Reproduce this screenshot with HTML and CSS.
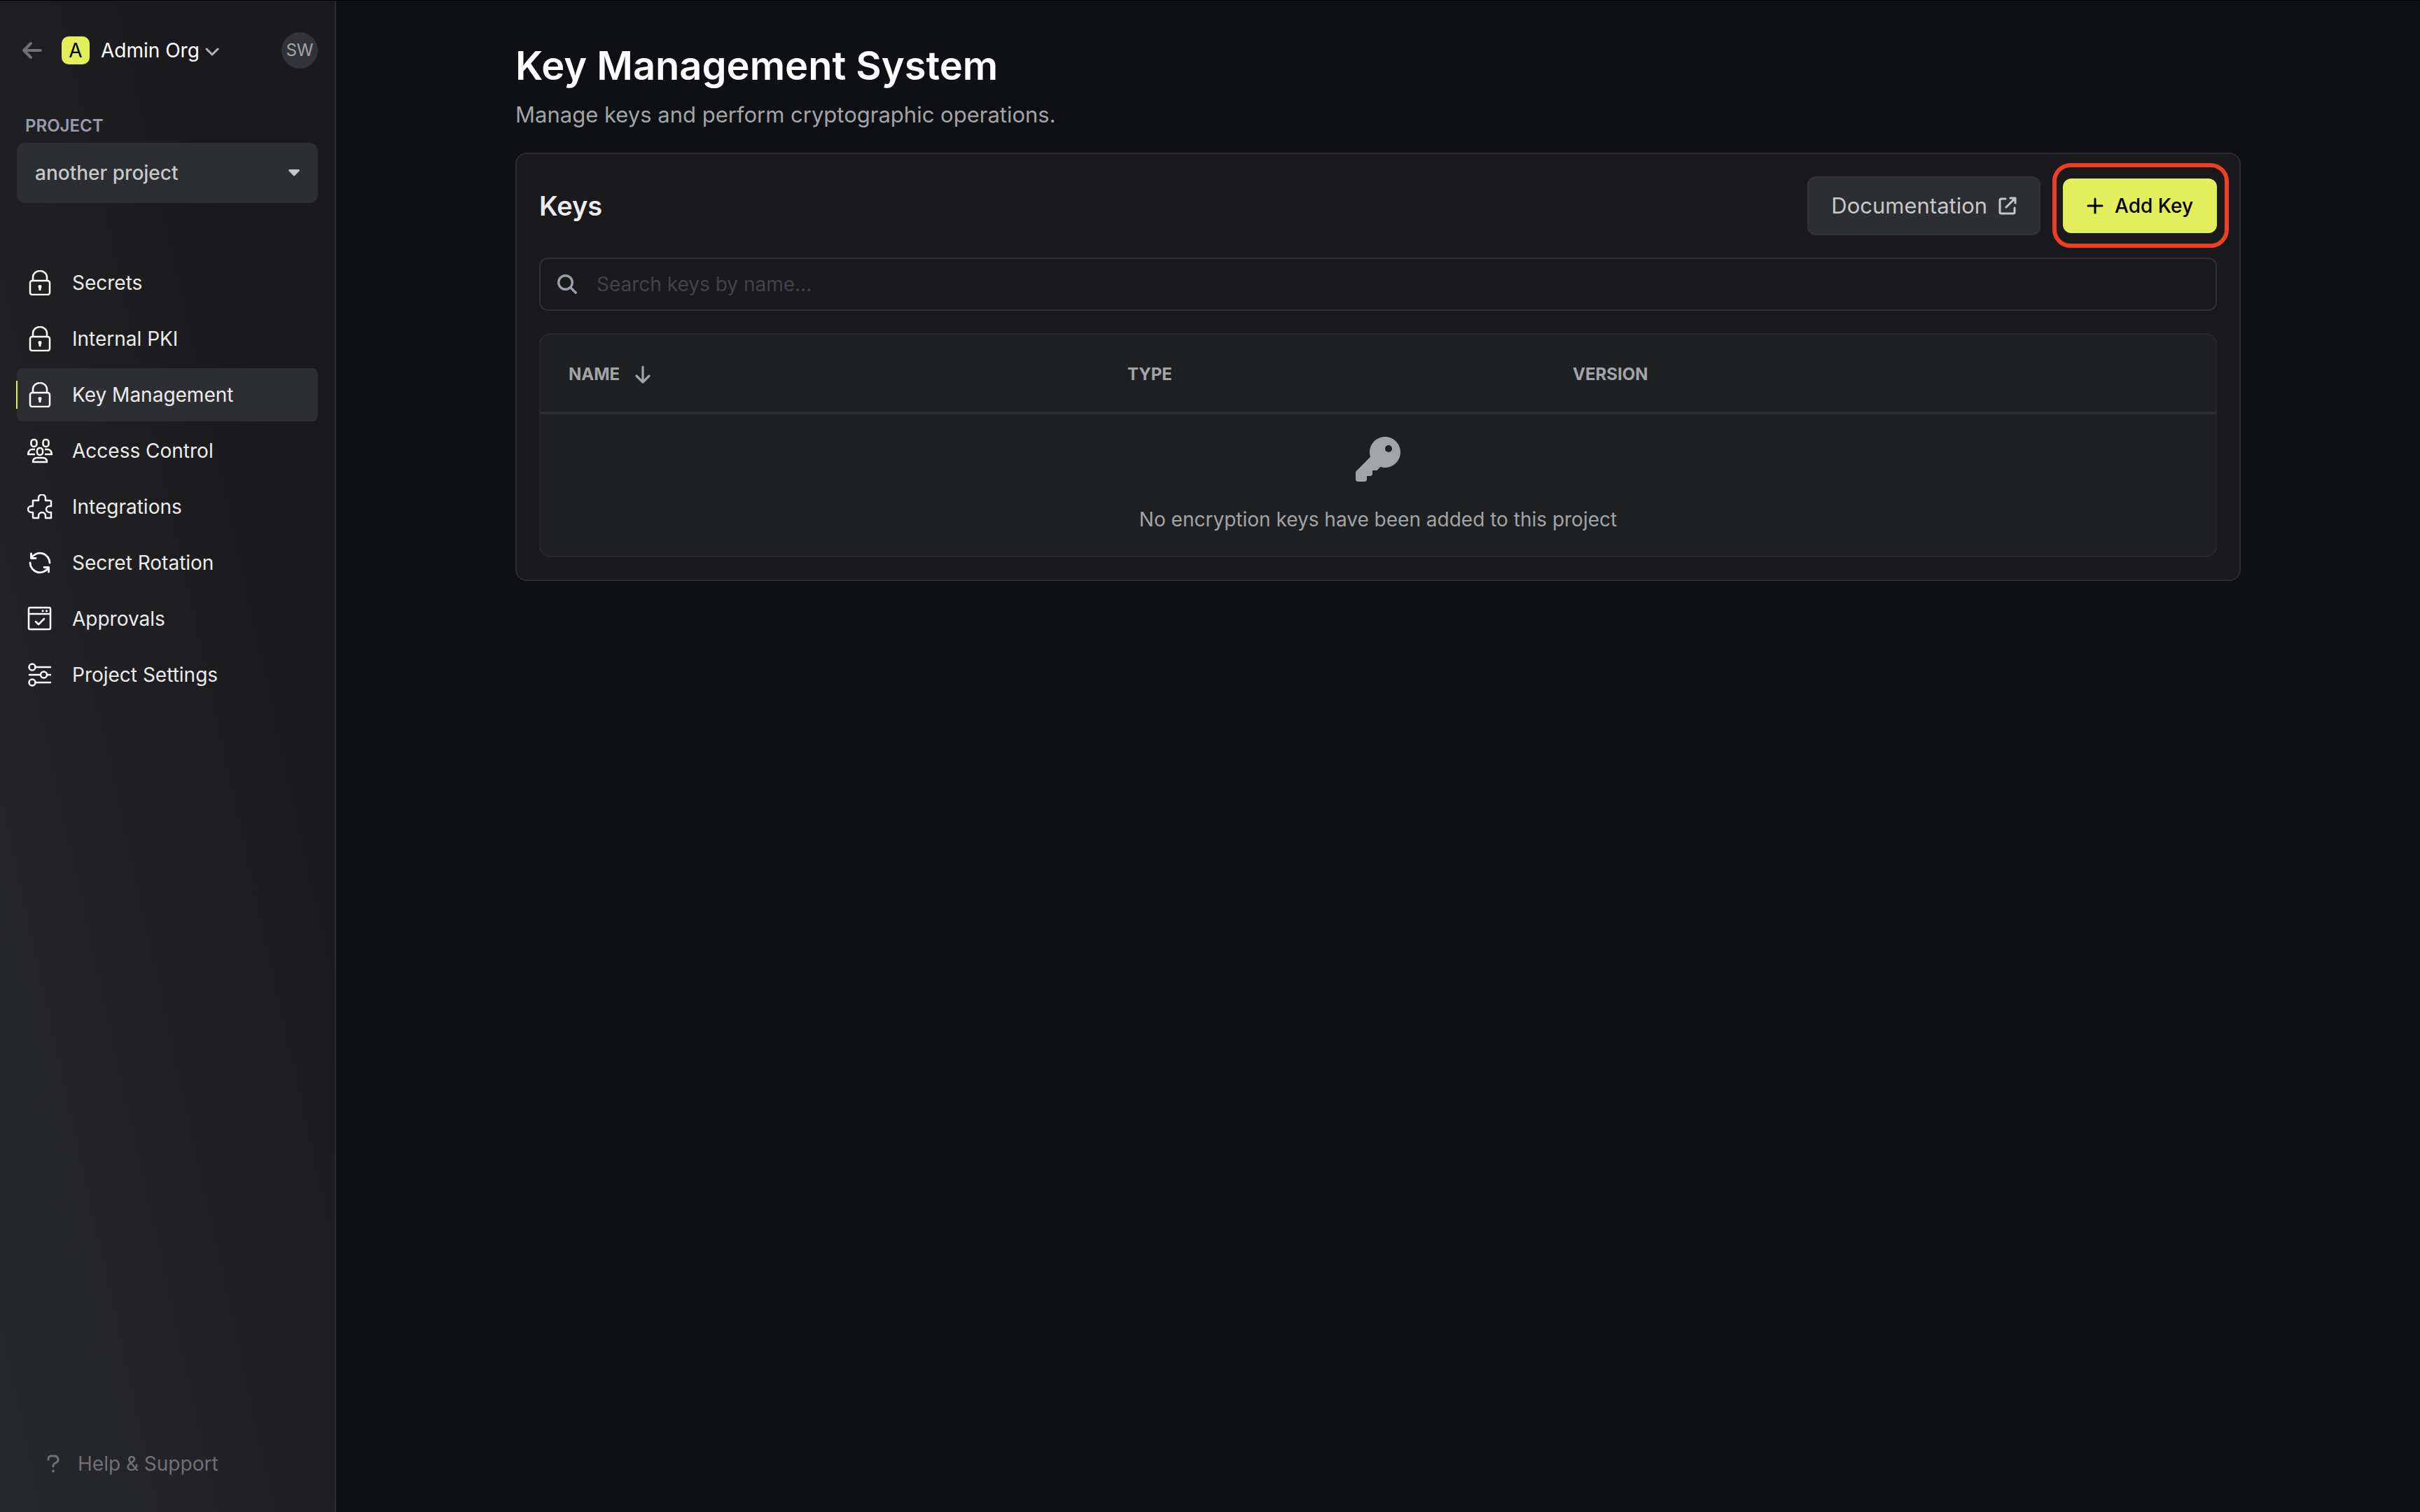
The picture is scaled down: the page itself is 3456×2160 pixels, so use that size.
FILE: index.html
```html
<!DOCTYPE html>
<html lang="en">
<head>
    <meta charset="UTF-8">
    <meta name="viewport" content="width=device-width, initial-scale=1.0">
    <title>Key Management System</title>
    <link rel="stylesheet" href="styles.css">
</head>
<body>
    <!-- Shared icons -->
    <svg class="sprite" aria-hidden="true">
        <symbol id="icon-lock" viewBox="0 0 36 36">
            <g fill="none" stroke="currentColor" stroke-width="2.500">
                <rect x="4" y="15" width="28" height="20" rx="3"/>
                <path d="M8 15V10a10 9 0 0 1 20 0v5"/>
                <path d="M18 24v5" stroke-width="3"/>
            </g>
            <circle cx="18" cy="23.500" r="2.500" fill="currentColor"/>
        </symbol>
    </svg>

    <div class="layout">
        <aside class="sidebar">
            <div class="org-bar">
                <a href="#" class="back-link" aria-label="Back">
                    <svg width="28" height="24" viewBox="0 0 28 24" fill="none" stroke="currentColor" stroke-width="4" stroke-linecap="round" stroke-linejoin="round">
                        <path d="M26 12H2M12 2L2 12l10 10"/>
                    </svg>
                </a>
                <button type="button" class="org-menu">
                    <span class="org-logo">A</span>
                    <span class="org-name">Admin Org</span>
                    <svg width="20" height="12" viewBox="0 0 20 12" fill="none" stroke="currentColor" stroke-width="3" stroke-linecap="round" stroke-linejoin="round">
                        <path d="M2 2l8 8 8-8"/>
                    </svg>
                </button>
                <button type="button" class="avatar">SW</button>
            </div>

            <label class="project-label" for="project">PROJECT</label>
            <div class="project-select">
                <select id="project">
                    <option>another project</option>
                </select>
                <svg class="caret" width="16" height="10" viewBox="0 0 16 10" fill="currentColor">
                    <path d="M1.500 0h13a1.300 1.300 0 0 1 1 2.200L9.200 8.700a1.700 1.700 0 0 1-2.400 0L.5 2.200A1.300 1.300 0 0 1 1.500 0z"/>
                </svg>
            </div>

            <nav class="menu">
                <a href="#" class="menu-item">
                    <svg class="menu-icon"><use href="#icon-lock"/></svg>
                    Secrets
                </a>
                <a href="#" class="menu-item">
                    <svg class="menu-icon"><use href="#icon-lock"/></svg>
                    Internal PKI
                </a>
                <a href="#" class="menu-item active">
                    <svg class="menu-icon"><use href="#icon-lock"/></svg>
                    Key Management
                </a>
                <a href="#" class="menu-item">
                    <svg class="menu-icon" viewBox="0 0 36 36" fill="none" stroke="currentColor" stroke-width="2.500" stroke-linejoin="round">
                        <rect x="5.500" y="2" width="8" height="10" rx="3.500"/>
                        <rect x="22.500" y="2" width="8" height="10" rx="3.500"/>
                        <rect x="14" y="14" width="8" height="10" rx="3.500"/>
                        <path d="M11 16H7q-5 0-6 7h10M25 16h4q5 0 6 7H25"/>
                        <path d="M8 34h20q0-6-6-6h-8q-6 0-6 6z"/>
                    </svg>
                    Access Control
                </a>
                <a href="#" class="menu-item">
                    <svg class="menu-icon" viewBox="0 0 36 36" fill="none" stroke="currentColor" stroke-width="2.500" stroke-linejoin="round">
                        <path d="M8 9h8V5.500a5 5 0 0 1 10 0V9h6a2 2 0 0 1 2 2v6h-2a5 4.500 0 0 0 0 9h2v8h-8v-3a5 5 0 0 0-10 0v3H9a1 1 0 0 1-1-1v-7H6a5 4.500 0 0 1 0-9h2z"/>
                    </svg>
                    Integrations
                </a>
                <a href="#" class="menu-item">
                    <svg class="menu-icon" viewBox="0 0 36 36" fill="none" stroke="currentColor" stroke-width="2.800" stroke-linecap="round" stroke-linejoin="round">
                        <path d="M32 18A14 14 0 0 0 6 11M4 18a14 14 0 0 0 26 7"/>
                        <path d="M5.500 5v6.500H12M30.500 31v-6.500H24"/>
                    </svg>
                    Secret Rotation
                </a>
                <a href="#" class="menu-item">
                    <svg class="menu-icon" viewBox="0 0 36 36" fill="none" stroke="currentColor" stroke-width="2.500" stroke-linecap="round" stroke-linejoin="round">
                        <rect x="2" y="2" width="31" height="31" rx="2"/>
                        <path d="M2 11h31"/>
                        <path d="M12 22l4 4 8-8"/>
                        <path d="M22 6.800h.1M27.500 6.800h.1" stroke-width="3"/>
                    </svg>
                    Approvals
                </a>
                <a href="#" class="menu-item">
                    <svg class="menu-icon" viewBox="0 0 36 36" fill="none" stroke="currentColor" stroke-width="2.500" stroke-linecap="round">
                        <circle cx="7" cy="7" r="4.500"/>
                        <circle cx="23.500" cy="18" r="4.500"/>
                        <circle cx="7" cy="29" r="4.500"/>
                        <path d="M11.500 7H33M3 18h16M28 18h5M11.500 29H33"/>
                    </svg>
                    Project Settings
                </a>
            </nav>

            <button type="button" class="help">
                <svg width="18" height="26" viewBox="0 0 18 26" fill="none" stroke="currentColor" stroke-width="3" stroke-linecap="round" stroke-linejoin="round">
                    <path d="M2 7V6a4 4 0 0 1 4-4h5a5 5 0 0 1 2.500 9.300L11 12.800a4 4 0 0 0-2 3.400V17"/>
                    <circle cx="9" cy="23.500" r="2" fill="currentColor" stroke="none"/>
                </svg>
                Help &amp; Support
            </button>
        </aside>

        <main class="main">
            <div class="content">
                <h1>Key Management System</h1>
                <p class="subtitle">Manage keys and perform cryptographic operations.</p>

                <section class="card">
                    <div class="card-header">
                        <h2>Keys</h2>
                        <a href="#" class="docs-button">
                            Documentation
                            <svg width="26" height="26" viewBox="0 0 26 26" fill="none" stroke="currentColor" stroke-width="3" stroke-linecap="round" stroke-linejoin="round">
                                <path d="M10 3H4a2 2 0 0 0-2 2v17a2 2 0 0 0 2 2h17a2 2 0 0 0 2-2v-6"/>
                                <path d="M17 2h7v7M24 2L11 15"/>
                            </svg>
                        </a>
                        <div class="add-wrap">
                            <button type="button" class="add-button">
                                <svg width="24" height="24" viewBox="0 0 24 24" fill="none" stroke="currentColor" stroke-width="3" stroke-linecap="round">
                                    <path d="M12 2v20M2 12h20"/>
                                </svg>
                                Add Key
                            </button>
                        </div>
                    </div>

                    <div class="search">
                        <svg width="28" height="28" viewBox="0 0 28 28" fill="none" stroke="currentColor" stroke-width="3.400" stroke-linecap="round">
                            <circle cx="11.500" cy="11.500" r="9.800"/>
                            <path d="M19 19l7.300 7.300"/>
                        </svg>
                        <input type="text" placeholder="Search keys by name..." aria-label="Search keys by name">
                    </div>

                    <div class="table-box">
                        <table>
                            <thead>
                                <tr>
                                    <th class="col-name">
                                        <div class="sort">
                                            NAME
                                            <button type="button" aria-label="Sort by name">
                                                <svg width="22" height="26" viewBox="0 0 22 26" fill="none" stroke="currentColor" stroke-width="3.200" stroke-linecap="round" stroke-linejoin="round">
                                                    <path d="M11 2v22M2 15l9 9 9-9"/>
                                                </svg>
                                            </button>
                                        </div>
                                    </th>
                                    <th class="col-type">TYPE</th>
                                    <th>VERSION</th>
                                </tr>
                            </thead>
                            <tbody>
                                <tr>
                                    <td colspan="3" class="empty">
                                        <svg width="64" height="64" viewBox="0 0 512 512" fill="currentColor">
                                            <path d="M336 352c97.200 0 176-78.800 176-176S433.200 0 336 0 160 78.800 160 176c0 18.700 2.900 36.800 8.300 53.700L7 391c-4.500 4.500-7 10.600-7 17v80c0 13.300 10.700 24 24 24h80c13.300 0 24-10.700 24-24v-40h40c13.300 0 24-10.700 24-24v-40h40c6.400 0 12.500-2.500 17-7l33.300-33.300c16.900 5.400 35 8.300 53.700 8.300zm40-256a40 40 0 1 1 0 80 40 40 0 1 1 0-80z"/>
                                        </svg>
                                        <p>No encryption keys have been added to this project</p>
                                    </td>
                                </tr>
                            </tbody>
                        </table>
                    </div>
                </section>
            </div>
        </main>
    </div>
</body>
</html>
```

FILE: styles.css
```css
:root {
    --bg-color: #0e1014;
    --card-bg: #1a1a1c;
    --table-bg: #1f2022;
    --control-bg: #2d2e32;
    --border: #2c2d31;
    --text-color: #ececec;
    --text-muted: #a3a4a6;
    --primary: #e2ee5c;
    --highlight: #ec3f24;
}

* {
    box-sizing: border-box;
}

body {
    margin: 0;
    font-family: Inter, "Liberation Sans", sans-serif;
    font-size: 28px;
    line-height: 40px;
    background-color: var(--bg-color);
    color: var(--text-color);
}

a {
    color: inherit;
    text-decoration: none;
}

button, input, select {
    font: inherit;
    color: inherit;
}

button {
    padding: 0;
    background: none;
    border: none;
    cursor: pointer;
}

h1, h2, p {
    margin: 0;
}

svg {
    display: block;
    flex-shrink: 0;
}

.sprite {
    position: absolute;
    width: 0;
    height: 0;
}

.layout {
    display: flex;
    min-height: 100vh;
    border-top: 1px solid #000;
}

/* Sidebar */
.sidebar {
    display: flex;
    flex-direction: column;
    flex-shrink: 0;
    width: 480px;
    padding: 45px 24px 49px;
    background: linear-gradient(to top right, #28292d, #1a1a1c 75%);
    border-right: 2px solid var(--border);
}

.org-bar {
    display: flex;
    align-items: center;
    padding-left: 8px;
    margin-bottom: 58px;
}

.back-link {
    margin-right: 28px;
    color: #707174;
}

.org-menu {
    display: flex;
    align-items: center;
}

.org-logo {
    width: 40px;
    height: 40px;
    margin-right: 16px;
    border-radius: 10px;
    background-color: var(--primary);
    color: #000;
}

.org-name {
    margin-right: 8px;
    color: #fff;
}

.org-menu svg {
    margin-top: 4px;
    color: #b5b5b7;
}

.avatar {
    width: 52px;
    height: 52px;
    margin-left: auto;
    border-radius: 50%;
    background-color: #323338;
    color: #a3a4a6;
    font-size: 24px;
}

.project-label {
    padding-left: 12px;
    line-height: 48px;
    font-size: 24px;
    font-weight: 600;
    color: #989caa;
}

.project-select {
    position: relative;
    margin-bottom: 76px;
}

.project-select select {
    appearance: none;
    width: 100%;
    height: 86px;
    padding: 0 26px;
    border: none;
    border-radius: 12px;
    background-color: var(--control-bg);
    color: #c6c7c8;
    font-weight: 500;
}

.caret {
    position: absolute;
    top: 38px;
    right: 26px;
    color: #c6c7c8;
    pointer-events: none;
}

.menu {
    display: flex;
    flex-direction: column;
    gap: 4px;
}

.menu-item {
    position: relative;
    display: flex;
    align-items: center;
    gap: 28px;
    height: 76px;
    padding: 0 15px;
    border-radius: 8px;
}

.menu-item.active {
    background-color: var(--control-bg);
}

.menu-item.active::before {
    content: "";
    position: absolute;
    left: -1px;
    top: 18px;
    width: 2px;
    height: 40px;
    background-color: var(--primary);
}

.menu-icon {
    width: 36px;
    height: 36px;
    color: #fff;
}

.help {
    display: flex;
    align-items: center;
    gap: 26px;
    padding-left: 43px;
    margin-top: auto;
    color: #707174;
}

/* Main area */
.main {
    flex: 1;
}

.content {
    max-width: 2560px;
    margin: 0 auto;
    padding: 57px 48px;
}

h1 {
    margin-bottom: 6px;
    line-height: 72px;
    font-size: 56px;
    font-weight: 600;
    color: #fff;
}

.subtitle {
    margin-bottom: 26px;
    line-height: 56px;
    font-size: 31px;
    color: var(--text-muted);
}

.card {
    padding: 32px;
    background-color: var(--card-bg);
    border: 2px solid var(--border);
    border-radius: 16px;
}

.card-header {
    display: flex;
    align-items: center;
    margin-bottom: 32px;
}

h2 {
    flex: 1;
    font-size: 38px;
    font-weight: 600;
}

.docs-button {
    display: flex;
    align-items: center;
    gap: 16px;
    height: 84px;
    padding: 0 32px;
    border: 2px solid #323338;
    border-radius: 12px;
    background-color: var(--control-bg);
    color: #c6c7c8;
    font-size: 31px;
}

.add-wrap {
    position: relative;
    margin-left: 32px;
}

/* Ring around the add button */
.add-wrap::after {
    content: "";
    position: absolute;
    inset: -22px -17px -21px -15px;
    border: 6px solid var(--highlight);
    border-radius: 26px;
    pointer-events: none;
}

.add-button {
    display: flex;
    align-items: center;
    gap: 16px;
    height: 78px;
    padding: 0 34px;
    border-radius: 12px;
    background-color: var(--primary);
    color: #000;
    font-weight: 500;
}

.search {
    display: flex;
    align-items: center;
    gap: 28px;
    height: 76px;
    padding: 0 24px;
    margin-bottom: 32px;
    border: 2px solid #2f3136;
    border-radius: 12px;
    color: #9aa0aa;
}

.search input {
    flex: 1;
    padding: 0;
    border: none;
    outline: none;
    background: none;
    color: var(--text-color);
}

.search input::placeholder {
    color: #41434c;
}

.table-box {
    overflow: hidden;
    background-color: var(--table-bg);
    border: 2px solid #28292c;
    border-radius: 16px;
}

table {
    width: 100%;
    table-layout: fixed;
    border-collapse: separate;
    border-spacing: 0;
}

th {
    height: 114px;
    padding: 4px 40px 0;
    border-bottom: 4px solid #2d2e31;
    text-align: left;
    font-size: 24px;
    font-weight: 700;
    color: var(--text-muted);
}

.col-name {
    width: 798px;
}

.col-type {
    width: 636px;
}

.sort {
    display: flex;
    align-items: center;
    gap: 22px;
}

.empty {
    padding: 32px 40px;
    text-align: center;
    color: var(--text-muted);
}

.empty svg {
    margin: 0 auto 34px;
}
```
